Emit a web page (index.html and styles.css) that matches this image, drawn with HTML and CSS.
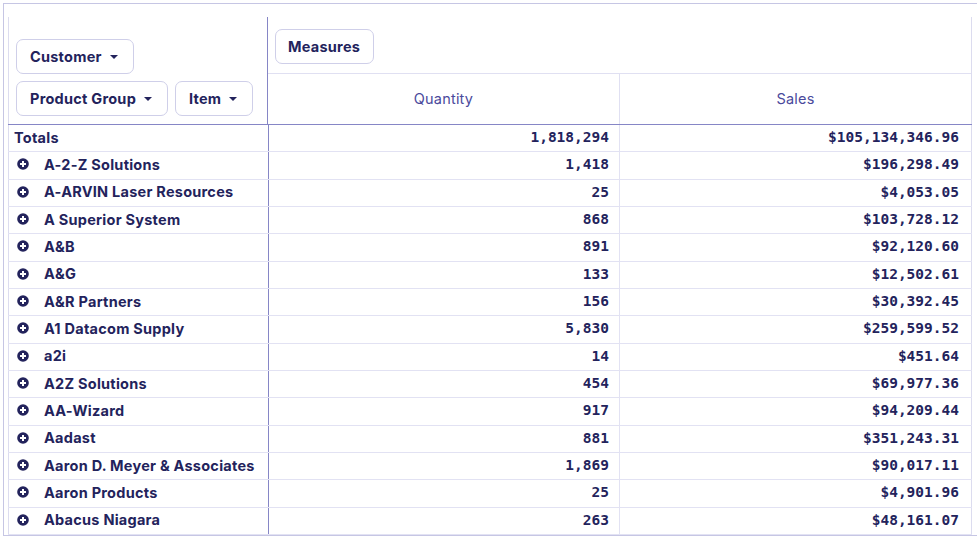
FILE: index.html
```html
<!DOCTYPE html>
<html>
<head>
<meta charset="utf-8">
<link rel="stylesheet" href="styles.css">
</head>
<body>
<div class="frame">
  <div class="pivot">
    <div class="head">
      <div class="corner">
        <div class="btn-row"><span class="btn">Customer <i class="caret"></i></span></div>
        <div class="btn-row"><span class="btn">Product Group <i class="caret"></i></span><span class="btn">Item <i class="caret"></i></span></div>
      </div>
      <div class="measures">
        <div class="mrow1"><span class="btn btn-plain">Measures</span></div>
        <div class="mrow2">
          <div class="mcell">Quantity</div>
          <div class="mcell last">Sales</div>
        </div>
      </div>
    </div>
    <div class="row totals"><div class="c1"><span class="lbl">Totals</span></div><div class="c2">1,818,294</div><div class="c3">$105,134,346.96</div></div>
    <div class="row"><div class="c1"><svg class="plus" viewBox="0 0 12 12"><circle cx="6" cy="6" r="5.8"/><path d="M3 6h6M6 3v6"/></svg><span class="lbl">A-2-Z Solutions</span></div><div class="c2">1,418</div><div class="c3">$196,298.49</div></div>
    <div class="row"><div class="c1"><svg class="plus" viewBox="0 0 12 12"><circle cx="6" cy="6" r="5.8"/><path d="M3 6h6M6 3v6"/></svg><span class="lbl">A-ARVIN Laser Resources</span></div><div class="c2">25</div><div class="c3">$4,053.05</div></div>
    <div class="row"><div class="c1"><svg class="plus" viewBox="0 0 12 12"><circle cx="6" cy="6" r="5.8"/><path d="M3 6h6M6 3v6"/></svg><span class="lbl">A Superior System</span></div><div class="c2">868</div><div class="c3">$103,728.12</div></div>
    <div class="row"><div class="c1"><svg class="plus" viewBox="0 0 12 12"><circle cx="6" cy="6" r="5.8"/><path d="M3 6h6M6 3v6"/></svg><span class="lbl">A&amp;B</span></div><div class="c2">891</div><div class="c3">$92,120.60</div></div>
    <div class="row"><div class="c1"><svg class="plus" viewBox="0 0 12 12"><circle cx="6" cy="6" r="5.8"/><path d="M3 6h6M6 3v6"/></svg><span class="lbl">A&amp;G</span></div><div class="c2">133</div><div class="c3">$12,502.61</div></div>
    <div class="row"><div class="c1"><svg class="plus" viewBox="0 0 12 12"><circle cx="6" cy="6" r="5.8"/><path d="M3 6h6M6 3v6"/></svg><span class="lbl">A&amp;R Partners</span></div><div class="c2">156</div><div class="c3">$30,392.45</div></div>
    <div class="row"><div class="c1"><svg class="plus" viewBox="0 0 12 12"><circle cx="6" cy="6" r="5.8"/><path d="M3 6h6M6 3v6"/></svg><span class="lbl">A1 Datacom Supply</span></div><div class="c2">5,830</div><div class="c3">$259,599.52</div></div>
    <div class="row"><div class="c1"><svg class="plus" viewBox="0 0 12 12"><circle cx="6" cy="6" r="5.8"/><path d="M3 6h6M6 3v6"/></svg><span class="lbl">a2i</span></div><div class="c2">14</div><div class="c3">$451.64</div></div>
    <div class="row"><div class="c1"><svg class="plus" viewBox="0 0 12 12"><circle cx="6" cy="6" r="5.8"/><path d="M3 6h6M6 3v6"/></svg><span class="lbl">A2Z Solutions</span></div><div class="c2">454</div><div class="c3">$69,977.36</div></div>
    <div class="row"><div class="c1"><svg class="plus" viewBox="0 0 12 12"><circle cx="6" cy="6" r="5.8"/><path d="M3 6h6M6 3v6"/></svg><span class="lbl">AA-Wizard</span></div><div class="c2">917</div><div class="c3">$94,209.44</div></div>
    <div class="row"><div class="c1"><svg class="plus" viewBox="0 0 12 12"><circle cx="6" cy="6" r="5.8"/><path d="M3 6h6M6 3v6"/></svg><span class="lbl">Aadast</span></div><div class="c2">881</div><div class="c3">$351,243.31</div></div>
    <div class="row"><div class="c1"><svg class="plus" viewBox="0 0 12 12"><circle cx="6" cy="6" r="5.8"/><path d="M3 6h6M6 3v6"/></svg><span class="lbl">Aaron D. Meyer &amp; Associates</span></div><div class="c2">1,869</div><div class="c3">$90,017.11</div></div>
    <div class="row"><div class="c1"><svg class="plus" viewBox="0 0 12 12"><circle cx="6" cy="6" r="5.8"/><path d="M3 6h6M6 3v6"/></svg><span class="lbl">Aaron Products</span></div><div class="c2">25</div><div class="c3">$4,901.96</div></div>
    <div class="row"><div class="c1"><svg class="plus" viewBox="0 0 12 12"><circle cx="6" cy="6" r="5.8"/><path d="M3 6h6M6 3v6"/></svg><span class="lbl">Abacus Niagara</span></div><div class="c2">263</div><div class="c3">$48,161.07</div></div>
  </div>
</div>
</body>
</html>
```
FILE: styles.css
```css
html, body {
  margin: 0;
  background: #ffffff;
}
body {
  font-family: Inter, "Noto Sans", sans-serif;
  color: #23235c;
}
.frame {
  margin: 3px 0 0 3px;
  height: 533px;
  box-sizing: border-box;
  border-top: 1px solid #c6c6e4;
  border-left: 1px solid #c6c6e4;
  border-bottom: 1px solid #c6c6e4;
  padding: 13px 0 0 4px;
  overflow: hidden;
}
.pivot {
  width: 964px;
}
.head {
  display: flex;
  height: 108px;
  box-sizing: border-box;
  border-bottom: 1px solid #8686c6;
}
.corner {
  width: 261px;
  box-sizing: border-box;
  border-left: 1px solid #dcdcef;
  border-right: 1px solid #8686c6;
  display: flex;
  flex-direction: column;
  justify-content: flex-end;
  gap: 7px;
  padding: 0 0 8px 7px;
}
.btn-row {
  display: flex;
  gap: 7px;
}
.btn {
  display: inline-flex;
  align-items: center;
  height: 35px;
  box-sizing: border-box;
  border: 1px solid #cfcfe9;
  border-radius: 7px;
  padding: 0 15px 0 13px;
  font-size: 14.5px;
  letter-spacing: 0.25px;
  font-weight: 700;
  color: #23235c;
  white-space: nowrap;
}
.btn-plain {
  padding: 0 13px 0 12px;
  height: 35px;
}
.caret {
  display: inline-block;
  width: 0;
  height: 0;
  margin-left: 8px;
  border-left: 4px solid transparent;
  border-right: 4px solid transparent;
  border-top: 4px solid #23235c;
}
.measures {
  width: 703px;
  display: flex;
  flex-direction: column;
  border-right: 1px solid #dcdcef;
}
.mrow1 {
  height: 57px;
  box-sizing: border-box;
  border-bottom: 1px solid #e0e0f2;
  display: flex;
  align-items: center;
  padding: 2px 0 0 7px;
}
.mrow2 {
  flex: 1;
  display: flex;
}
.mcell {
  width: 351px;
  display: flex;
  align-items: center;
  justify-content: center;
  border-right: 1px solid #e0e0f2;
  font-size: 14.5px;
  letter-spacing: 0.2px;
  color: #4a4a9c;
  padding-bottom: 1px;
}
.mcell.last {
  border-right: none;
  flex: 1;
}
.row {
  display: flex;
  height: 27.33px;
  box-sizing: border-box;
  border-bottom: 1px solid #e2e2f3;
}
.c1 {
  width: 261px;
  box-sizing: border-box;
  border-left: 1px solid #dcdcef;
  border-right: 1px solid #8686c6;
  display: flex;
  align-items: center;
  padding: 0 0 2px 8px;
}
.totals .c1 {
  padding-left: 5px;
}
.lbl {
  font-size: 14.5px;
  letter-spacing: 0.25px;
  font-weight: 700;
  white-space: nowrap;
}
.plus {
  width: 12px;
  height: 12px;
  margin-right: 15px;
  flex: none;
}
.plus circle {
  fill: #23235c;
}
.plus path {
  stroke: #ffffff;
  stroke-width: 2;
  fill: none;
}
.c2, .c3 {
  box-sizing: border-box;
  display: flex;
  align-items: center;
  justify-content: flex-end;
  font-family: "DejaVu Sans Mono", "Liberation Mono", monospace;
  font-weight: 700;
  font-size: 14.5px;
  color: #23235c;
  padding-bottom: 2px;
}
.c2 {
  width: 351px;
  border-right: 1px solid #e2e2f3;
  padding-right: 10px;
}
.c3 {
  width: 352px;
  border-right: 1px solid #dcdcef;
  padding-right: 12px;
}
```
